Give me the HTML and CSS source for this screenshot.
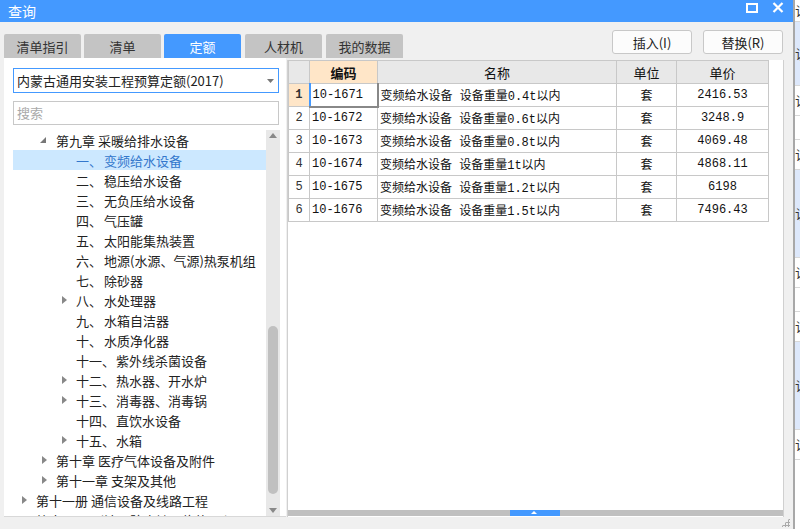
FILE: index.html
```html
<!DOCTYPE html>
<html lang="zh">
<head>
<meta charset="utf-8">
<title>查询</title>
<link rel="stylesheet" href="styles.css">
</head>
<body>
<div class="screen">
  <div class="window">
    <div class="titlebar">
      <span class="title">查询</span>
      <div class="winctl">
        <svg class="ico" width="12" height="10" viewBox="0 0 12 10"><rect x="1" y="1" width="10" height="8" fill="none" stroke="#fff" stroke-width="2"/></svg>
        <svg class="ico" width="12" height="11" viewBox="0 0 12 11"><path d="M1.5 1 L10.5 10 M10.5 1 L1.5 10" stroke="#fff" stroke-width="2.2"/></svg>
      </div>
    </div>
    <div class="toolbar">
      <div class="tabs">
        <div class="tab">清单指引</div>
        <div class="tab">清单</div>
        <div class="tab active">定额</div>
        <div class="tab">人材机</div>
        <div class="tab">我的数据</div>
      </div>
      <div class="buttons">
        <button class="btn">插入(I)</button>
        <button class="btn">替换(R)</button>
      </div>
    </div>
    <div class="content">
      <div class="leftpanel">
        <div class="select">
          <span>内蒙古通用安装工程预算定额(2017)</span>
          <svg width="7" height="4" viewBox="0 0 7 4"><path d="M0 0 H7 L3.5 4 Z" fill="#777"/></svg>
        </div>
        <div class="search">搜索</div>
        <div class="tree">
          <div class="tree-rows">
            <div class="row lv1"><span class="arrow open"></span><span class="txt">第九章 采暖给排水设备</span></div>
            <div class="row lv2 sel"><span class="arrow none"></span><span class="num">一、</span><span class="txt">变频给水设备</span></div>
            <div class="row lv2"><span class="arrow none"></span><span class="num">二、</span><span class="txt">稳压给水设备</span></div>
            <div class="row lv2"><span class="arrow none"></span><span class="num">三、</span><span class="txt">无负压给水设备</span></div>
            <div class="row lv2"><span class="arrow none"></span><span class="num">四、</span><span class="txt">气压罐</span></div>
            <div class="row lv2"><span class="arrow none"></span><span class="num">五、</span><span class="txt">太阳能集热装置</span></div>
            <div class="row lv2"><span class="arrow none"></span><span class="num">六、</span><span class="txt">地源(水源、气源)热泵机组</span></div>
            <div class="row lv2"><span class="arrow none"></span><span class="num">七、</span><span class="txt">除砂器</span></div>
            <div class="row lv2"><span class="arrow"></span><span class="num">八、</span><span class="txt">水处理器</span></div>
            <div class="row lv2"><span class="arrow none"></span><span class="num">九、</span><span class="txt">水箱自洁器</span></div>
            <div class="row lv2"><span class="arrow none"></span><span class="num">十、</span><span class="txt">水质净化器</span></div>
            <div class="row lv2"><span class="arrow none"></span><span class="num wide">十一、</span><span class="txt">紫外线杀菌设备</span></div>
            <div class="row lv2"><span class="arrow"></span><span class="num wide">十二、</span><span class="txt">热水器、开水炉</span></div>
            <div class="row lv2"><span class="arrow"></span><span class="num wide">十三、</span><span class="txt">消毒器、消毒锅</span></div>
            <div class="row lv2"><span class="arrow none"></span><span class="num wide">十四、</span><span class="txt">直饮水设备</span></div>
            <div class="row lv2"><span class="arrow"></span><span class="num wide">十五、</span><span class="txt">水箱</span></div>
            <div class="row lv1"><span class="arrow"></span><span class="txt">第十章 医疗气体设备及附件</span></div>
            <div class="row lv1"><span class="arrow"></span><span class="txt">第十一章 支架及其他</span></div>
            <div class="row lv0"><span class="arrow"></span><span class="txt">第十一册 通信设备及线路工程</span></div>
            <div class="row lv0"><span class="arrow"></span><span class="txt">第十二册 刷油、防腐蚀、绝热工程</span></div>
          </div>
          <div class="vscroll">
            <span class="up"></span>
            <div class="track"><div class="thumb"></div></div>
            <span class="down"></span>
          </div>
        </div>
      </div>
      <div class="gridpanel">
        <table class="grid">
          <colgroup>
            <col class="c-idx"><col class="c-code"><col class="c-name"><col class="c-unit"><col class="c-price">
          </colgroup>
          <thead>
            <tr><th class="idx"></th><th class="hl">编码</th><th>名称</th><th>单位</th><th>单价</th></tr>
          </thead>
          <tbody>
            <tr><td class="idx cur">1</td><td class="code focus">10-1671</td><td>变频给水设备 设备重量0.4t以内</td><td class="ctr">套</td><td class="ctr">2416.53</td></tr>
            <tr><td class="idx">2</td><td class="code">10-1672</td><td>变频给水设备 设备重量0.6t以内</td><td class="ctr">套</td><td class="ctr">3248.9</td></tr>
            <tr><td class="idx">3</td><td class="code">10-1673</td><td>变频给水设备 设备重量0.8t以内</td><td class="ctr">套</td><td class="ctr">4069.48</td></tr>
            <tr><td class="idx">4</td><td class="code">10-1674</td><td>变频给水设备 设备重量1t以内</td><td class="ctr">套</td><td class="ctr">4868.11</td></tr>
            <tr><td class="idx">5</td><td class="code">10-1675</td><td>变频给水设备 设备重量1.2t以内</td><td class="ctr">套</td><td class="ctr">6198</td></tr>
            <tr><td class="idx">6</td><td class="code">10-1676</td><td>变频给水设备 设备重量1.5t以内</td><td class="ctr">套</td><td class="ctr">7496.43</td></tr>
          </tbody>
        </table>
        <div class="hscroll"><div class="hthumb"><span class="tri"></span></div></div>
      </div>
    </div>
    <div class="statusbar"><span class="grip"></span></div>
  </div>
  <div class="edge"></div>
  <div class="behind">
    <div class="b b1"><span>认</span></div>
    <div class="b b2 blue"><span>认</span></div>
    <div class="b b3"><span>认</span></div>
    <div class="b b4"></div>
    <div class="b b5"><span>认</span></div>
    <div class="b b6 blue"><span>认</span></div>
    <div class="b b7"><span>认</span></div>
    <div class="b b8"></div>
    <div class="b b9"><span>认</span></div>
    <div class="b b10 blue"><span>认</span></div>
    <div class="b b11"><span>认</span></div>
  </div>
</div>
</body>
</html>
```

FILE: styles.css
```css
* { box-sizing: border-box; }
html, body { margin: 0; padding: 0; }
body {
  width: 800px; height: 529px; overflow: hidden;
  font-family: "Noto Sans CJK SC", "Noto Sans", sans-serif;
  font-size: 13px; color: #222; background: #fff;
}
.screen { display: flex; width: 800px; height: 529px; }
.window {
  width: 793px; height: 529px; flex: none;
  display: flex; flex-direction: column; background: #f0f0f0;
}
.titlebar {
  height: 22px; flex: none; background: #4499ff; color: #fff;
  display: flex; align-items: center; justify-content: space-between;
  padding: 0 9px 0 8px;
}
.title { font-size: 14px; line-height: 22px; }
.winctl { display: flex; align-items: center; gap: 14px; margin-top: -7px; }
.ico { display: block; }

.toolbar {
  height: 36px; flex: none; display: flex; justify-content: space-between;
  align-items: flex-start; padding: 0 10px 0 4px;
}
.tabs { display: flex; gap: 3px; margin-top: 12px; }
.tab {
  width: 77px; height: 24px; background: #c4c4c4; color: #333;
  display: flex; align-items: center; justify-content: center;
  font-size: 13px; border-radius: 2px 2px 0 0;
}
.tab:nth-child(4), .tab:nth-child(5) { margin-left: 1px; }
.tab.active { background: #4499ff; color: #fff; }
.buttons { display: flex; gap: 11px; margin-top: 8px; }
.btn {
  width: 80px; height: 24px; background: #fcfcfc; border: 1px solid #c8c8c8;
  border-radius: 3px; font-family: inherit; font-size: 13px; color: #222; padding: 0;
}

.content { flex: 1; display: flex; padding-left: 4px; min-height: 0; }
.leftpanel {
  width: 282px; flex: none; background: #fff; padding: 10px 6px 0 9px;
  display: flex; flex-direction: column; border-bottom: 1px solid #d8d8d8;
}
.select {
  height: 25px; border: 1px solid #4499ff; display: flex; align-items: center;
  justify-content: space-between; padding: 0 4px 0 3px; font-size: 13px; color: #222;
  flex: none; width: 266px;
}
.search {
  margin-top: 8px; height: 24px; border: 1px solid #c8c8c8; color: #aaa;
  padding-left: 3px; line-height: 22px; font-size: 13px; flex: none; width: 266px;
}
.tree { margin-top: 5px; flex: 1; display: flex; min-height: 0; overflow: hidden; }
.tree-rows { width: 253px; flex: none; overflow: hidden; }
.row { height: 20px; display: flex; align-items: center; white-space: nowrap; font-size: 13px; color: #222; }
.row.sel { background: #cce8ff; color: #3377cc; }
.row.lv0 { padding-left: 6px; }
.row.lv1 { padding-left: 26px; }
.row.lv2 { padding-left: 46px; }
.arrow {
  width: 17px; flex: none; height: 10px; position: relative;
}
.arrow::before {
  content: ""; position: absolute; left: 3px; top: 1px;
  border-left: 5px solid #888; border-top: 4px solid transparent; border-bottom: 4px solid transparent;
}
.arrow.open::before {
  left: 1px; top: 2px; border: none;
  border-right: 6px solid #777; border-top: 6px solid transparent;
}
.arrow.none::before { display: none; }
.num { width: 28px; flex: none; }
.num.wide { width: 40px; }
.txt { flex: none; }

.vscroll {
  width: 14px; flex: none; background: #e8e8e8; display: flex; flex-direction: column;
  align-items: center; margin-left: 0;
}
.up, .down { height: 12px; width: 14px; flex: none; position: relative; }
.up::before {
  content: ""; position: absolute; left: 3px; top: 3px;
  border-bottom: 5px solid #888; border-left: 4px solid transparent; border-right: 4px solid transparent;
}
.down::before {
  content: ""; position: absolute; left: 3px; top: 4px;
  border-top: 5px solid #888; border-left: 4px solid transparent; border-right: 4px solid transparent;
}
.track { flex: 1; width: 100%; display: flex; flex-direction: column; align-items: center; padding-top: 184px; }
.thumb { width: 10px; height: 168px; background: #c0c0c0; border-radius: 5px; }

.gridpanel {
  width: 497px; flex: none; margin-left: 1px; margin-top: 2px; background: #fff;
  border-left: 1px solid #d0d0d0; border-right: 1px solid #d0d0d0;
  display: flex; flex-direction: column; justify-content: space-between;
}
.grid {
  border-collapse: collapse; table-layout: fixed; width: 480px;
  font-family: "Liberation Mono", "Noto Sans CJK SC", monospace; font-size: 12px; color: #111;
}
.c-idx { width: 21px; } .c-code { width: 68px; } .c-name { width: 239px; }
.c-unit { width: 60px; } .c-price { width: 92px; }
.grid th, .grid td { border: 1px solid #c8c8c8; height: 23px; padding: 0 2px; white-space: nowrap; overflow: hidden; }
.grid th {
  background: #e8e8e8; font-family: "Noto Sans CJK SC", sans-serif; font-weight: normal; font-size: 13px; text-align: center;
}
.grid th.hl { background: #ffe6c8; font-weight: bold; }
.grid td.idx { text-align: center; color: #333; padding: 0; }
.grid td.idx.cur { background: #ffe6c8; font-weight: bold; }
.grid td.ctr { text-align: center; }
.grid td.focus { border-left: 2px solid #4499ff; border-right: 2px solid #888; border-bottom: 2px solid #888; }

.hscroll {
  height: 6px; background: #c0c0c0; position: relative; flex: none; margin-bottom: 1px;
}
.hthumb {
  position: absolute; left: 222px; top: 0; width: 50px; height: 6px; background: #4499ff;
}
.tri {
  position: absolute; left: 21px; top: 1px;
  border-bottom: 3px solid #fff; border-left: 3px solid transparent; border-right: 3px solid transparent;
}
.statusbar { height: 12px; flex: none; position: relative; }
.grip {
  position: absolute; right: 3px; bottom: 2px; width: 9px; height: 9px;
  background:
    radial-gradient(circle, #aaa 1px, transparent 1.2px) 0 0 / 3px 3px;
  clip-path: polygon(100% 0, 100% 100%, 0 100%);
}
.edge { width: 2px; flex: none; background: #a8a8a8; }
.behind { flex: 1; background: #fff; display: flex; flex-direction: column; overflow: hidden; }
.b { border-bottom: 1px solid #d8d8d8; display: flex; align-items: center; overflow: hidden; }
.b span { font-family: "Noto Sans CJK SC", sans-serif; font-size: 13px; color: #333; margin-left: 0; }
.b.blue { background: #dde8fb; }
.b1 { height: 22px; }
.b2 { height: 64px; }
.b3 { height: 30px; }
.b4 { height: 24px; }
.b5 { height: 30px; }
.b6 { height: 88px; }
.b7 { height: 30px; }
.b8 { height: 24px; }
.b9 { height: 30px; }
.b10 { height: 88px; }
.b11 { height: 30px; }
```
